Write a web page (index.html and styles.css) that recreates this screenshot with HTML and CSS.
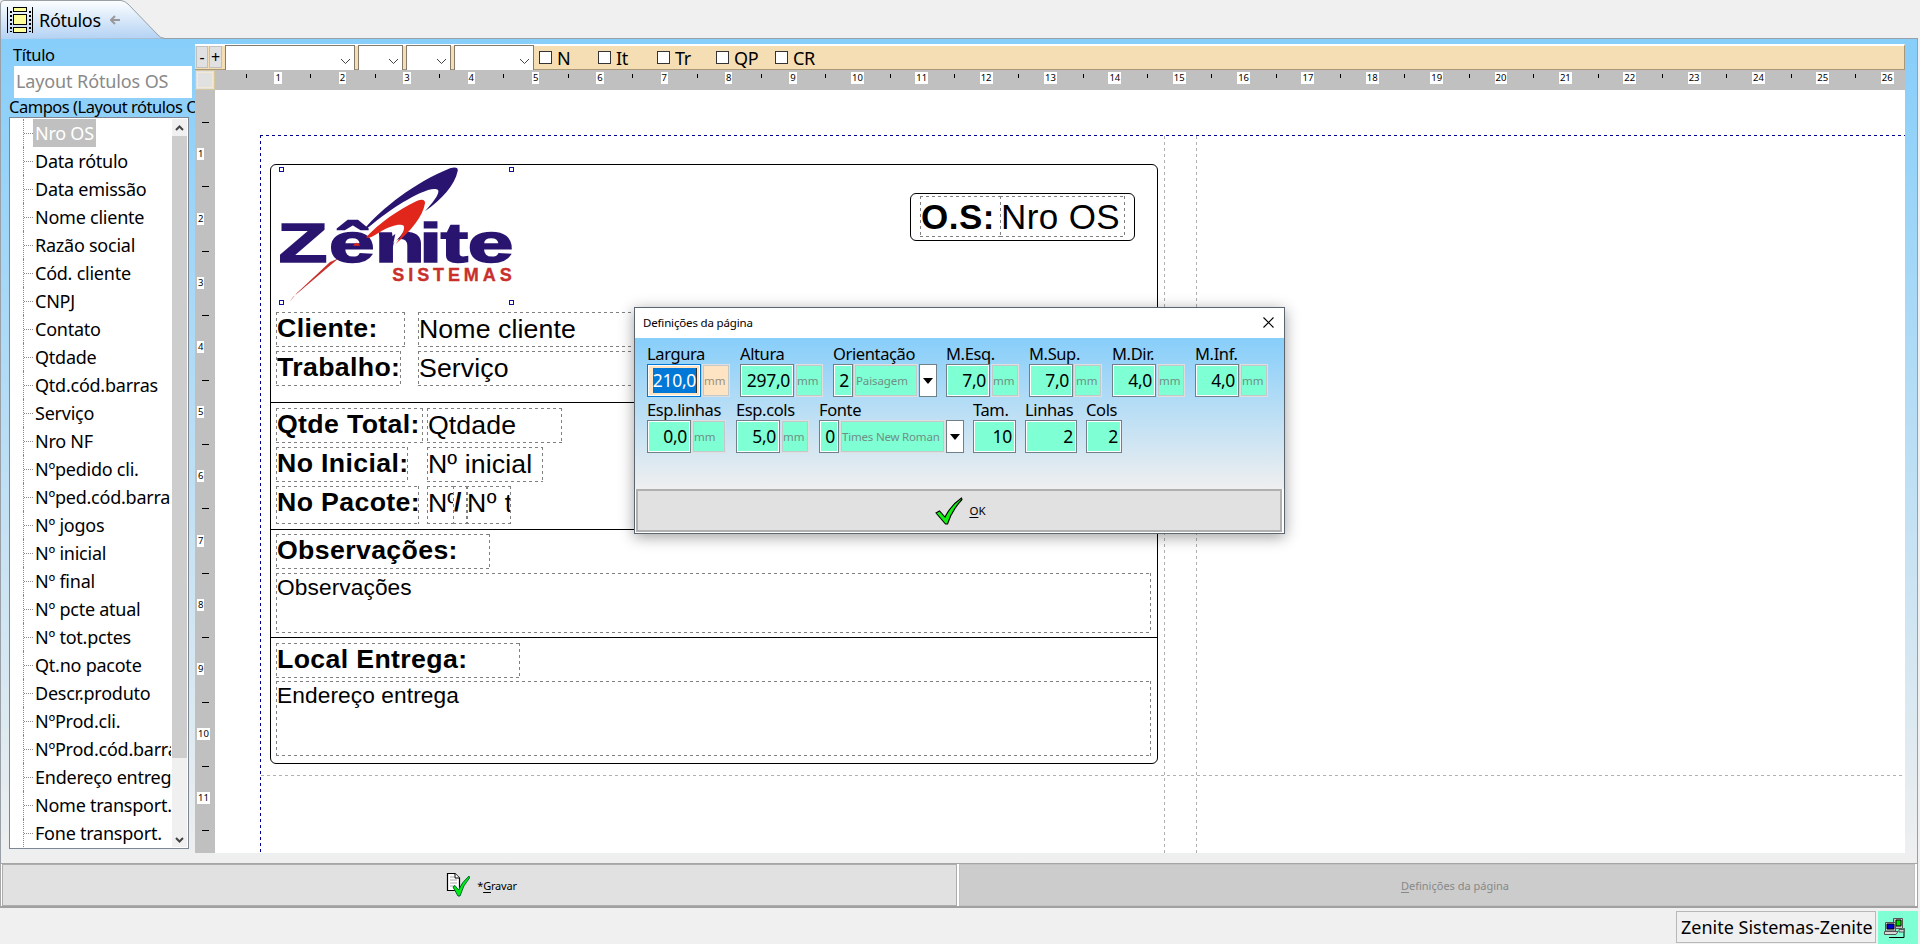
FILE: index.html
```html
<!DOCTYPE html>
<html lang="pt-BR">
<head>
<meta charset="utf-8">
<title>Rótulos</title>
<link rel="stylesheet" href="styles.css">
</head>
<body>
<div class="app">
  <header class="tabs">
    <svg class="tabshape" width="170" height="39" viewBox="0 0 170 39">
      <defs><linearGradient id="tg" x1="0" y1="0" x2="0" y2="1"><stop offset="0" stop-color="#fdfeff"/><stop offset="1" stop-color="#b3d2f4"/></linearGradient></defs>
      <path d="M.5 39V4Q.5 .5 4 .5H121Q125 1 128 4L158 35Q160 38 165 38.500" fill="url(#tg)" stroke="#99a0a8"/>
    </svg>
    <div class="tab">
      <svg width="26" height="28" viewBox="0 0 26 28" shape-rendering="crispEdges">
        <path d="M.5 1V27M25.500 1V27" stroke="#000"/>
        <path d="M3.500 5V26M22.500 5V26" stroke="#000" stroke-width="2" stroke-dasharray="2 2"/>
        <path d="M6.500 1.500h13v4h-13zM6.500 8.500h13v10h-13zM6.500 21.500h13v5h-13z" fill="#ffff99" stroke="#000"/>
      </svg>
      <span class="tabname">Rótulos</span>
      <svg width="10" height="10" viewBox="0 0 10 10"><path d="M10 5H2M5 1L1 5L5 9" fill="none" stroke="#999" stroke-width="2"/></svg>
    </div>
  </header>

  <main class="page">
    <aside class="side">
      <label class="lbl">Título</label>
      <div class="title-input">Layout Rótulos OS</div>
      <div class="lbl campos">Campos (Layout rótulos OS)</div>
      <div class="tree">
        <ul>
          <li class="sel"><span>Nro OS</span></li><li><span>Data rótulo</span></li><li><span>Data emissão</span></li><li><span>Nome cliente</span></li><li><span>Razão social</span></li><li><span>Cód. cliente</span></li><li><span>CNPJ</span></li><li><span>Contato</span></li><li><span>Qtdade</span></li><li><span>Qtd.cód.barras</span></li><li><span>Serviço</span></li><li><span>Nro NF</span></li><li><span>Nºpedido cli.</span></li><li><span>Nºped.cód.barras</span></li><li><span>Nº jogos</span></li><li><span>Nº inicial</span></li><li><span>Nº final</span></li><li><span>Nº pcte atual</span></li><li><span>Nº tot.pctes</span></li><li><span>Qt.no pacote</span></li><li><span>Descr.produto</span></li><li><span>NºProd.cli.</span></li><li><span>NºProd.cód.barras</span></li><li><span>Endereço entrega</span></li><li><span>Nome transport.</span></li><li><span>Fone transport.</span></li>
        </ul>
        <div class="scroll">
          <svg width="15" height="17" viewBox="0 0 15 17"><path d="M4 11L7.500 7.500L11 11" fill="none" stroke="#444" stroke-width="2"/></svg>
          <div class="thumb"></div>
          <svg width="15" height="17" viewBox="0 0 15 17"><path d="M4 7L7.500 10.500L11 7" fill="none" stroke="#444" stroke-width="2"/></svg>
        </div>
      </div>
    </aside>

    <section class="editor">
      <div class="toolbar">
        <button class="zm">-</button><button class="zm plus">+</button>
        <div class="combo c1"><svg width="11" height="7" viewBox="0 0 11 7"><path d="M1 1L5.500 5.500L10 1" fill="none" stroke="#444"/></svg></div>
        <div class="combo c2"><svg width="11" height="7" viewBox="0 0 11 7"><path d="M1 1L5.500 5.500L10 1" fill="none" stroke="#444"/></svg></div>
        <div class="combo c2"><svg width="11" height="7" viewBox="0 0 11 7"><path d="M1 1L5.500 5.500L10 1" fill="none" stroke="#444"/></svg></div>
        <div class="combo c3"><svg width="11" height="7" viewBox="0 0 11 7"><path d="M1 1L5.500 5.500L10 1" fill="none" stroke="#444"/></svg></div>
        <div class="checks"><span><i></i>N</span><span><i></i>It</span><span><i></i>Tr</span><span><i></i>QP</span><span><i></i>CR</span></div>
      </div>
      <div class="hrow">
        <div class="corner"></div>
        <div class="hruler"><b><u>1</u></b><b><u>2</u></b><b><u>3</u></b><b><u>4</u></b><b><u>5</u></b><b><u>6</u></b><b><u>7</u></b><b><u>8</u></b><b><u>9</u></b><b><u>10</u></b><b><u>11</u></b><b><u>12</u></b><b><u>13</u></b><b><u>14</u></b><b><u>15</u></b><b><u>16</u></b><b><u>17</u></b><b><u>18</u></b><b><u>19</u></b><b><u>20</u></b><b><u>21</u></b><b><u>22</u></b><b><u>23</u></b><b><u>24</u></b><b><u>25</u></b><b><u>26</u></b></div>
      </div>
      <div class="work">
        <div class="vruler"><b><u>1</u></b><b><u>2</u></b><b><u>3</u></b><b><u>4</u></b><b><u>5</u></b><b><u>6</u></b><b><u>7</u></b><b><u>8</u></b><b><u>9</u></b><b><u>10</u></b><b><u>11</u></b><b></b></div>
        <div class="canvas">
          <div class="margin"></div>
          <div class="guide gv1"></div><div class="guide gv2"></div><div class="guide gh"></div>
          <div class="frame"></div>
          <div class="rule r1"></div><div class="rule r2"></div><div class="rule r3"></div>
          <svg class="logo" width="234" height="134" viewBox="90 141 702 402">
            <path d="M340 330C400 262 490 190 600 145Q626 138 623 153C615 195 575 238 525 274C552 244 570 220 564 210C550 198 500 222 460 246C410 277 375 306 345 330Z" fill="#29146f"/>
            <path d="M266 415L130 530L118 547L140 520L240 426Z" fill="#c9302c"/>
            <text x="54.700 158 249.300 338.700 381.300 435.300" y="426" class="zen" transform="scale(1.500 1)">Zênite</text>
            <path d="M436 334C452 318 466 312 466 320C462 340 446 354 430 370L436 342Z" fill="#fff"/>
            <path d="M348 352C390 308 440 272 500 243Q526 233 525 250C519 290 480 335 437 372C456 346 466 326 461 317C450 309 422 318 396 332C380 341 370 349 355 354Z" fill="#e1261c"/>
            <path d="M309 377Q320 360 331 377Z" fill="#e1261c"/>
            <text x="427" y="483" class="sis" textLength="358" lengthAdjust="spacing">SISTEMAS</text>
          </svg>
          <i class="hd h1"></i><i class="hd h2"></i><i class="hd h3"></i><i class="hd h4"></i>
          <div class="osbox"></div>
          <div class="f os1">O.S:</div><div class="f os2">Nro OS</div>
          <div class="f bold cli">Cliente:</div><div class="f ncli">Nome cliente</div>
          <div class="f bold tra">Trabalho:</div><div class="f ser">Serviço</div>
          <div class="f bold qtt">Qtde Total:</div><div class="f qtd">Qtdade</div>
          <div class="f bold noi">No Inicial:</div><div class="f nin">Nº inicial</div>
          <div class="f bold nop">No Pacote:</div><div class="f np1">Nº</div><div class="f np2">/</div><div class="f np3">Nº t</div>
          <div class="f bold obs">Observações:</div><div class="f small obt">Observações</div>
          <div class="f bold loc">Local Entrega:</div><div class="f small end">Endereço entrega</div>
        </div>
      </div>
    </section>
  </main>

  <div class="actions">
    <button class="act save">
      <svg width="28" height="28" viewBox="0 0 28 28"><path d="M1.500 2.500H9L13.500 7V19.500H1.500Z" fill="#fff" stroke="#000" stroke-width="1.200"/><path d="M9 2.500V7H13.500" fill="#fff" stroke="#000"/><path d="M4 6h4M4 9h7M4 12h7M4 15h5" stroke="#aaa"/><path d="M7 16L9 14.500L12.500 19Q16 11 23 5L23.500 7Q17 14 14 25H12Z" fill="#0e1" stroke="#063" stroke-width="1"/></svg>
      <span>*<u>G</u>ravar</span>
    </button>
    <button class="act off"><span><u>D</u>efinições da página</span></button>
  </div>

  <footer class="status">
    <div class="who">Zenite Sistemas-Zenite</div>
    <div class="net">
      <svg width="22" height="20" viewBox="0 0 22 20"><path d="M5 19.500H20V10" fill="none" stroke="#000"/><path d="M9.500 .5H18.500V10.500H9.500Z" fill="#c8c8c8" stroke="#555"/><path d="M12 2H17V8H12Z" fill="#0d0" stroke="#000"/><path d="M1.500 4.500H11.500V13H1.500Z" fill="#d0d0d0" stroke="#555"/><path d="M3 6H10V11H3Z" fill="#00c" stroke="#000"/><path d="M.5 13.500H14L12 16.500H.5ZM15 11.500H20V14H15Z" fill="#d8d8d8" stroke="#555"/></svg>
    </div>
  </footer>

  <div class="dialog">
    <div class="dtitle"><span>Definições da página</span><svg width="11" height="11" viewBox="0 0 11 11"><path d="M.5 .5L10.500 10.500M10.500 .5L.5 10.500" stroke="#000" stroke-width="1.100"/></svg></div>
    <div class="dbody">
      <div class="drow">
        <div class="g gL"><label>Largura</label><div class="w"><span class="v w54 focus"><em>210,0</em></span><span class="m pe">mm</span></div></div>
        <div class="g gL"><label>Altura</label><div class="w"><span class="v w54">297,0</span><span class="m">mm</span></div></div>
        <div class="g gO"><label>Orientação</label><div class="w"><span class="v w20">2</span><span class="m w63">Paisagem</span><span class="dd"></span></div></div>
        <div class="g gM"><label>M.Esq.</label><div class="w"><span class="v w44">7,0</span><span class="m">mm</span></div></div>
        <div class="g gM"><label>M.Sup.</label><div class="w"><span class="v w44">7,0</span><span class="m">mm</span></div></div>
        <div class="g gM"><label>M.Dir.</label><div class="w"><span class="v w44">4,0</span><span class="m">mm</span></div></div>
        <div class="g gM"><label>M.Inf.</label><div class="w"><span class="v w44">4,0</span><span class="m">mm</span></div></div>
      </div>
      <div class="drow">
        <div class="g gE"><label>Esp.linhas</label><div class="w"><span class="v w44">0,0</span><span class="m w34">mm</span></div></div>
        <div class="g gC"><label>Esp.cols</label><div class="w"><span class="v w44">5,0</span><span class="m">mm</span></div></div>
        <div class="g gF"><label>Fonte</label><div class="w"><span class="v w20">0</span><span class="m w105">Times New Roman</span><span class="dd"></span></div></div>
        <div class="g gT"><label>Tam.</label><div class="w"><span class="v w43">10</span></div></div>
        <div class="g gN"><label>Linhas</label><div class="w"><span class="v w52">2</span></div></div>
        <div class="g"><label>Cols</label><div class="w"><span class="v w36">2</span></div></div>
      </div>
    </div>
    <button class="ok"><svg width="28" height="28" viewBox="0 0 28 28"><path d="M1 16L4.500 14L10 20Q16 8 26.500 1L27 2.500Q17 13 12.500 27H10.500Z" fill="#1e1" stroke="#000" stroke-width="1.100"/></svg><span><u>O</u>K</span></button>
  </div>
</div>
</body>
</html>
```
FILE: styles.css
```css
* { box-sizing: border-box; }
body { margin: 0; width: 1920px; height: 944px; overflow: hidden; background: #f0f0f0; font-family: "Noto Sans", "Open Sans", sans-serif; color: #000; }
button { font-family: inherit; padding: 0; border-radius: 0; }
.app { position: relative; height: 944px; display: flex; flex-direction: column; }
.tabs { height: 38px; position: relative; flex: none; }
.tabshape { position: absolute; left: 0; top: 0; display: block; }
.tab { position: relative; display: flex; align-items: center; height: 38px; padding: 2px 0 0 7px; }
.tabname { font-size: 18px; letter-spacing: -.3px; margin: 0 9px 0 6px; line-height: 24px; }

.page { height: 825px; flex: none; width: 1918px; display: flex; border: 1px solid #99a0a8; border-bottom: 0; background: linear-gradient(#87cefa, #efefef); }
.side { width: 194px; flex: none; padding-left: 8px; overflow: hidden; }
.lbl { display: block; font-size: 16.500px; letter-spacing: -.35px; line-height: 20px; padding: 6px 0 0 4px; height: 27px; white-space: nowrap; }
.title-input { margin-left: 5px; width: 178px; height: 32px; background: #fff; color: #8a8a8a; font-size: 18px; letter-spacing: -.12px; line-height: 31px; padding-left: 2px; }
.campos { padding: 0; height: 19px; line-height: 17px; letter-spacing: -.48px; }
.tree { margin-top: 0; width: 180px; height: 732px; background: #fff; border: 1px solid #7d8793; display: flex; padding: 1px; overflow: hidden; }
.tree ul { margin: 0; padding: 0 0 0 12px; list-style: none; width: 160px; flex: none; overflow: hidden; }
.tree li { height: 28px; width: 300px; display: flex; align-items: center; font-size: 18px; letter-spacing: -.24px; white-space: nowrap; border-left: 1px dotted #888; }
.tree li::before { content: ""; width: 9px; border-top: 1px dotted #888; flex: none; }
.tree li span { padding: 0 2px; line-height: 28px; }
.tree li.sel span { background: #c0c0c0; color: #fff; }
.scroll { width: 15px; background: #f0f0f0; display: flex; flex-direction: column; margin-left: 1px; }
.scroll svg { display: block; flex: none; }
.thumb { height: 622px; background: #cdcdcd; margin-bottom: 73px; flex: none; }

.editor { width: 1710px; height: 814px; margin-top: 5px; display: flex; flex-direction: column; }
.toolbar { height: 26px; flex: none; background: #f5deb3; border-top: 2px solid #fff; border-bottom: 1px solid #a89878; border-right: 1px solid #a89878; display: flex; }
.zm { width: 12px; height: 22px; background: #e1e1e1; border: 1px solid #c0c0c0; font-size: 16px; line-height: 20px; margin: 0 1px; display: flex; justify-content: center; }
.plus { width: 13px; margin: 0 3px 0 0; }
.combo { height: 26px; margin-top: -1px; background: #fff; border: 1px solid #857b6a; border-bottom: 0; display: flex; justify-content: flex-end; align-items: flex-end; padding: 0 3px 6px 0; margin-right: 3px; }
.c1 { width: 130px; } .c2 { width: 45px; } .c3 { width: 80px; }
.checks { display: flex; margin-left: 2px; }
.checks span { width: 59px; display: flex; font-size: 18px; line-height: 25px; letter-spacing: -.4px; gap: 5px; }
.checks i { width: 13px; height: 13px; border: 1px solid #333; background: #fff; margin-top: 5px; }
.hrow { display: flex; height: 20px; flex: none; background: #c0c0c0; }
.corner { width: 20px; height: 20px; border: 1px solid #d8c8a0; background: #e1e1e1; outline: 1px solid #f3ead5; outline-offset: -3px; flex: none; }
.hruler { display: flex; padding-left: 31px; overflow: hidden; }
.hruler b, .vruler b { flex: none; display: block; font-weight: normal; position: relative; }
.hruler b { width: 64.360px; height: 20px; text-align: center; }
.hruler b::before { content: ""; position: absolute; left: 0; top: 4px; width: 1px; height: 4px; background: #000; }
.hruler u, .vruler u { display: inline-block; text-decoration: none; background: #fff; font-size: 9.500px; line-height: 12px; height: 12px; padding: 0 1px; min-width: 7px; text-align: center; }
.hruler u { vertical-align: top; margin-top: 2px; }
.work { display: flex; height: 763px; }
.vruler { width: 20px; background: #c0c0c0; padding-top: 32px; overflow: hidden; display: flex; flex-direction: column; flex: none; }
.vruler b { height: 64.400px; padding-left: 2px; display: flex; align-items: center; }
.vruler b::before { content: ""; position: absolute; left: 7px; top: 0; width: 7px; height: 1px; background: #000; }

/* Label designer surface: objects are placed freely */
.canvas { position: relative; width: 1690px; height: 763px; background: #fff; overflow: hidden; font-family: "Liberation Sans", Arial, sans-serif; }
.canvas > * { position: absolute; }
.margin, .f {
  --dash: #808080;
  background:
    repeating-linear-gradient(90deg, var(--dash) 0 3px, transparent 3px 6px) 0 0 / 100% 1px no-repeat border-box,
    repeating-linear-gradient(90deg, var(--dash) 0 3px, transparent 3px 6px) 0 100% / 100% 1px no-repeat border-box,
    repeating-linear-gradient(var(--dash) 0 3px, transparent 3px 6px) 0 0 / 1px 100% no-repeat border-box,
    repeating-linear-gradient(var(--dash) 0 3px, transparent 3px 6px) 100% 0 / 1px 100% no-repeat border-box;
}
.margin { --dash: #000090; left: 45px; top: 45px; width: 1700px; height: 800px; }
.gv1, .gv2 { top: 46px; width: 1px; height: 720px; background: repeating-linear-gradient(#b0b0b0 0 3px, transparent 3px 6px); }
.gv1 { left: 949px; }
.gv2 { left: 981px; }
.gh { left: 46px; top: 685px; width: 1650px; height: 1px; background: repeating-linear-gradient(90deg, #b0b0b0 0 3px, transparent 3px 6px); }
.frame { left: 55px; top: 74px; width: 888px; height: 600px; border: 1px solid #000; border-radius: 6px; }
.rule { left: 56px; width: 886px; height: 1px; background: #000; }
.r1 { top: 312px; } .r2 { top: 439px; } .r3 { top: 547px; }
.logo { left: 65px; top: 77px; }
.zen { font: bold 164px "Liberation Sans", Arial, sans-serif; fill: #29146f; stroke: #29146f; stroke-width: 5px; }
.sis { font: bold 54px "Liberation Sans", Arial, sans-serif; fill: #c9302c; stroke: #c9302c; stroke-width: 1px; }
.hd { width: 5px; height: 5px; border: 1px solid #1010a0; background: #fff; }
.h1 { left: 64px; top: 77px; } .h2 { left: 294px; top: 77px; } .h3 { left: 64px; top: 210px; } .h4 { left: 294px; top: 210px; }
.osbox { left: 695px; top: 103px; width: 225px; height: 48px; border: 1px solid #000; border-radius: 6px; }
.f { border: 1px solid transparent; font-size: 26.700px; letter-spacing: .1px; line-height: 33px; height: 35px; white-space: nowrap; overflow: hidden; }
.bold { font-weight: bold; line-height: 31px; letter-spacing: .36px; }
.os1, .os2 { top: 106px; height: 41px; font-size: 35px; line-height: 40px; letter-spacing: .4px; }
.os1 { left: 705px; width: 81px; font-weight: bold; letter-spacing: .5px; }
.os2 { left: 785px; width: 125px; }
.cli { left: 61px; top: 222px; width: 129px; } .ncli { left: 203px; top: 222px; width: 500px; }
.tra { left: 61px; top: 261px; width: 125px; } .ser { left: 203px; top: 261px; width: 500px; }
.qtt { left: 61px; top: 318px; width: 147px; } .qtd { left: 212px; top: 318px; width: 135px; }
.noi { left: 61px; top: 357px; width: 132px; } .nin { left: 212px; top: 357px; width: 116px; }
.nop { left: 61px; top: 396px; width: 143px; height: 38px; }
.np1 { left: 212px; top: 396px; width: 27px; height: 38px; } .np2 { left: 238px; top: 396px; width: 15px; height: 38px; font-weight: bold; line-height: 31px; } .np3 { left: 251px; top: 396px; width: 45px; height: 38px; letter-spacing: .4px; }
.obs { left: 61px; top: 444px; width: 214px; } .loc { left: 61px; top: 553px; width: 244px; }
.small { font-size: 22.700px; line-height: 26px; width: 875px; left: 61px; letter-spacing: .1px; }
.obt { top: 483px; height: 60px; } .end { top: 591px; height: 75px; }

.actions { display: flex; height: 45px; flex: none; border: 1px solid #a6a6a6; border-bottom: 2px solid #a0a0a0; width: 1918px; padding-left: 1px; background: #fff; }
.act { border: 1px solid #adadad; font-size: 11px; background: #e1e1e1; color: #000; display: flex; align-items: center; justify-content: center; gap: 3px; }
.save { width: 955px; margin-right: 2px; letter-spacing: -.2px; padding-left: 4px; }
.off { width: 956px; background: #ccc; color: #888; border-color: #c2c2c2; padding-left: 36px; }
.status { margin-top: 2px; height: 34px; display: flex; justify-content: flex-end; border-top: 1px solid #f0f0f0; padding-right: 2px; gap: 2px; }
.who { width: 200px; height: 32px; border: 1px solid #b8b8b8; font-size: 18px; letter-spacing: 0; line-height: 31px; padding-left: 4px; white-space: nowrap; }
.net { width: 40px; background: #7fffd4; padding: 7px 0 0 6px; }

.dialog { position: absolute; left: 634px; top: 307px; width: 651px; height: 227px; border: 1px solid #5c6670; box-shadow: 0 3px 14px rgba(0,0,0,.38); display: flex; flex-direction: column; background: #fff; }
.dtitle { height: 30px; display: flex; justify-content: space-between; align-items: center; padding: 0 10px 2px 8px; font-size: 11.500px; letter-spacing: -.16px; }
.dbody { height: 151px; background: linear-gradient(#87cefa, #efefef); padding: 7px 0 0 12px; display: flex; flex-direction: column; }
.drow { display: flex; height: 56px; }
.g label { display: block; font-size: 16.500px; letter-spacing: -.38px; line-height: 17px; height: 19px; white-space: nowrap; }
.w { display: flex; height: 33px; gap: 1px; }
.gL { width: 93px; } .gO { width: 113px; } .gM { width: 83px; } .gE { width: 89px; } .gC { width: 83px; } .gF { width: 154px; } .gT { width: 52px; } .gN { width: 61px; }
.v { height: 33px; border: 1px solid #6f8088; box-shadow: inset 0 0 0 1px #fff; background: #7fffd4; font-size: 17.500px; letter-spacing: -.3px; line-height: 31px; text-align: right; padding-right: 3px; }
.m { width: 28px; height: 33px; border: 2px solid #c3c8c8; outline: 1px solid #e0dede; outline-offset: -1px; background: #7fffd4; color: #6f8f85; font-size: 11.500px; line-height: 29px; letter-spacing: -.1px; white-space: nowrap; }
.w54 { width: 54px; } .w44 { width: 44px; } .w20 { width: 20px; } .w63 { width: 64px; } .w34 { width: 34px; } .w105 { width: 105px; letter-spacing: -.2px; } .w43 { width: 43px; } .w52 { width: 52px; } .w36 { width: 36px; }
.focus { background: #ffe4c4; border-color: #0078d7; }
.focus em { font-style: normal; display: inline-block; background: #0078d7; color: #fff; height: 25px; line-height: 25px; margin-top: 3px; border-right: 1px solid #333; vertical-align: top; }
.pe { background: #ffe4c4; color: #999080; }
.dd { width: 18px; height: 33px; border: 1px solid #6f8088; background: #fff; display: flex; align-items: center; justify-content: center; }
.dd::before { content: ""; border: 5px solid transparent; border-top: 6px solid #000; border-bottom: 0; }
.ok { height: 43px; margin: 0 2px 0 1px; border: 2px solid #b0b0b0; background: #e1e1e1; font-size: 11.500px; display: flex; align-items: center; justify-content: center; gap: 6px; padding-left: 3px; }
.off u, .save u, .ok u { text-underline-offset: 2px; }
```
